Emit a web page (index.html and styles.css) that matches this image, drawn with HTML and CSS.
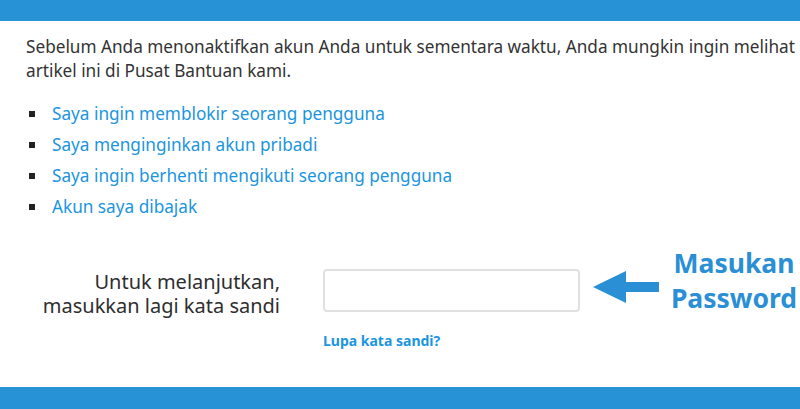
FILE: index.html
```html
<!DOCTYPE html>
<html lang="id">
<head>
<meta charset="utf-8">
<title>Nonaktifkan akun</title>
<link rel="stylesheet" href="styles.css">
</head>
<body>
<div class="page">
  <div class="bar"></div>
  <main class="content">
    <p class="intro">Sebelum Anda menonaktifkan akun Anda untuk sementara waktu, Anda mungkin ingin melihat artikel ini di Pusat Bantuan kami.</p>
    <ul class="links">
      <li><a href="#">Saya ingin memblokir seorang pengguna</a></li>
      <li><a href="#">Saya menginginkan akun pribadi</a></li>
      <li><a href="#">Saya ingin berhenti mengikuti seorang pengguna</a></li>
      <li><a href="#">Akun saya dibajak</a></li>
    </ul>
    <div class="form-row">
      <label class="label" for="pw"><span class="label-line">Untuk melanjutkan,</span><span class="label-line">masukkan lagi kata sandi</span></label>
      <div class="field">
        <input id="pw" class="input" type="password">
        <a href="#" class="forgot">Lupa kata sandi?</a>
      </div>
      <svg class="arrow" width="66" height="34" viewBox="0 0 66 34">
        <polygon points="0,16 33,0 33,11 66,11 66,21 33,21 33,32" fill="#2a8fd4"/>
      </svg>
      <div class="note"><span class="note-line">Masukan</span><span class="note-line">Password</span></div>
    </div>
  </main>
  <div class="bar bar-bottom"></div>
</div>
</body>
</html>
```
FILE: styles.css
```css
html, body {
  margin: 0;
  padding: 0;
  background: #fff;
}
.page {
  width: 800px;
  height: 409px;
  display: flex;
  flex-direction: column;
  overflow: hidden;
  font-family: "Noto Sans", "Open Sans", sans-serif;
  color: #333;
}
.bar {
  height: 21px;
  background: #2892d6;
  flex: none;
}
.bar-bottom {
  height: 22px;
}
.content {
  flex: 1;
  padding: 14px 0 0 26px;
  white-space: nowrap;
}
.intro {
  margin: 0;
  font-size: 17.2px;
  line-height: 23.5px;
  white-space: normal;
  width: 772px;
}
.links {
  list-style: none;
  margin: 16px 0 0 0;
  padding: 0;
}
.links li {
  display: flex;
  align-items: center;
  height: 31px;
  font-size: 17.2px;
}
.links li::before {
  content: "";
  width: 6px;
  height: 6px;
  background: #222;
  margin: 0 17px 0 3px;
  flex: none;
}
.links a {
  color: #1b95e0;
  text-decoration: none;
}
.form-row {
  display: flex;
  align-items: flex-start;
  margin-top: 47px;
}
.label {
  width: 254px;
  text-align: right;
  font-size: 20px;
  line-height: 24px;
  padding-top: 1px;
  color: #2e2e2e;
  display: flex;
  flex-direction: column;
}
.label-line {
  display: block;
  height: 24px;
}
.field {
  margin-left: 43px;
  display: flex;
  flex-direction: column;
}
.input {
  width: 257px;
  height: 43px;
  box-sizing: border-box;
  border: 2px solid #e1e1e1;
  border-radius: 4px;
  margin: 0;
  padding: 0 8px;
  background: #fff;
}
.forgot {
  margin-top: 19px;
  font-size: 14px;
  line-height: 19px;
  font-weight: bold;
  color: #1b95e0;
  text-decoration: none;
}
.arrow {
  margin: 2px 0 0 13px;
  flex: none;
}
.note {
  margin: -23px 0 0 10px;
  width: 130px;
  font-size: 26.5px;
  font-weight: bold;
  line-height: 35px;
  color: #2a8fd4;
  text-align: center;
  display: flex;
  flex-direction: column;
}
.note-line {
  display: block;
  height: 35px;
}
```
